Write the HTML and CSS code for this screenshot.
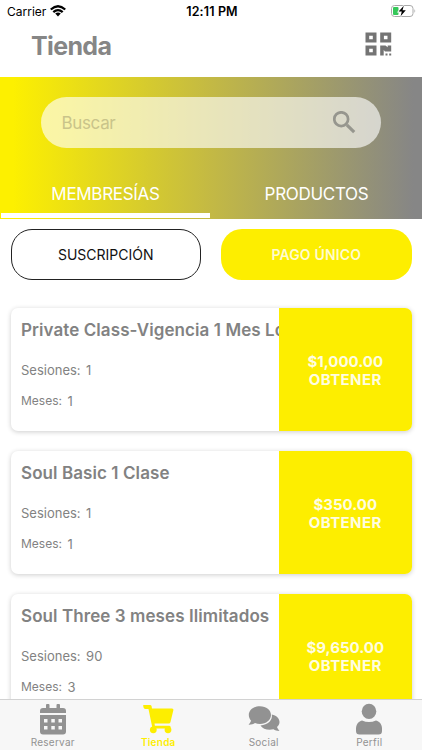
FILE: index.html
```html
<!DOCTYPE html>
<html lang="es">
<head>
<meta charset="utf-8">
<title>Tienda</title>
<link rel="stylesheet" href="styles.css">
</head>
<body>
<div class="app">
  <div class="status">
    <div class="carrier"><span>Carrier</span>
      <svg width="16" height="12" viewBox="0 0 16 12" fill="none" stroke="#000" stroke-width="2.300"><path d="M.8 4.500Q8-2 15.200 4.500M3.300 7.200Q8 3 12.700 7.200"/><path d="M5.200 8.600Q8 6.600 10.800 8.600L8 11.500Z" fill="#000" stroke="none"/></svg>
    </div>
    <span class="time">12:11 PM</span>
    <svg class="battery" width="26" height="12" viewBox="0 0 26 12"><rect x=".5" y=".5" width="21.5" height="11" rx="3" fill="#fff" stroke="#aaa"/><path d="M23.500 4q1.500 2 0 4z" fill="#999"/><rect x="2" y="2" width="5.500" height="8" rx="1" fill="#35c759"/><path d="M12.800.8L7.600 6.600h3.200L9.600 11.200l5.200-6h-3.300z" fill="#000" stroke="#fff" stroke-width="1.600" paint-order="stroke"/></svg>
  </div>
  <header class="header">
    <h1>Tienda</h1>
    <svg width="27" height="24" viewBox="0 0 27 24" fill="#747474"><path fill-rule="evenodd" d="M.5.500h11v10H.5zM4.200 3.700v3.600h3.600V3.700zM15.200.500h11v10h-11zM18.900 3.700v3.600h3.600V3.700zM.5 13.500h11v10H.5zM4.200 16.700v3.600h3.600v-3.600z"/><path d="M15.200 13.500h5.300l2.200 1.700v-1.700h3.500v6H20l-1.300-1.500v5.500h-3.500zM20.500 21.500h2v2h-2zM24.200 21.500h2v2h-2z"/></svg>
  </header>
  <section class="hero">
    <div class="search"><span>Buscar</span>
      <svg width="23" height="23" viewBox="0 0 23 23" fill="none" stroke="#96968e"><circle cx="8.200" cy="8.200" r="6.900" stroke-width="2.700"/><path d="M13.800 13.800l7.400 7.400" stroke-width="3.200"/></svg>
    </div>
    <div class="tabs"><div class="tab active"><span>MEMBRESÍAS</span></div><div class="tab"><span>PRODUCTOS</span></div></div>
  </section>
  <div class="pills"><div class="pill outline">SUSCRIPCIÓN</div><div class="pill solid">PAGO ÚNICO</div></div>
  <main class="list">
    <article class="card"><div class="info"><h2>Private Class-Vigencia 1 Mes Locker</h2><p class="sessions"><span>Sesiones:</span><span>1</span></p><p class="months"><span>Meses:</span><span>1</span></p></div><div class="buy"><span>$1,000.00</span><span class="get">OBTENER</span></div></article>
    <article class="card"><div class="info"><h2>Soul Basic 1 Clase</h2><p class="sessions"><span>Sesiones:</span><span>1</span></p><p class="months"><span>Meses:</span><span>1</span></p></div><div class="buy"><span>$350.00</span><span class="get">OBTENER</span></div></article>
    <article class="card"><div class="info"><h2>Soul Three 3 meses Ilimitados</h2><p class="sessions"><span>Sesiones:</span><span>90</span></p><p class="months"><span>Meses:</span><span>3</span></p></div><div class="buy"><span>$9,650.00</span><span class="get">OBTENER</span></div></article>
  </main>
  <nav class="nav">
    <div class="item"><svg width="32" height="32" viewBox="0 0 32 32"><path fill-rule="evenodd" d="M3 12h26v16.500q0 3-3 3H6q-3 0-3-3zM7 16v3.500h3.500V16zM14.300 16v3.500h3.500V16zM21.500 16v3.500H25V16zM7 23v3.500h3.500V23zM14.300 23v3.500h3.500V23zM21.500 23v3.500H25V23z"/><path d="M3 10V8q0-3 3-3h3V2q0-1 1-1h1.500q1 0 1 1v3h7V2q0-1 1-1H22q1 0 1 1v3h3q3 0 3 3v2z"/></svg><span>Reservar</span></div>
    <div class="item on"><svg width="32" height="32" viewBox="0 0 32 32"><path d="M1.500 2H8q1.300 0 1.600 1.300L10 5.500h20q1.700 0 1.400 1.600L28.500 19q-.3 1.500-1.800 1.500H12.500l.4 2.200H27q1.600 0 1.600 1.300T27 25.500H10.500L6.500 6H3.500Q1.200 6 1.200 2z"/><circle cx="11.300" cy="26.800" r="3.400"/><circle cx="26" cy="26.800" r="3.400"/></svg><span>Tienda</span></div>
    <div class="item"><svg width="32" height="32" viewBox="0 0 32 32"><path d="M23.800 11.500c4.600 1 7.700 3.900 7.700 7.500 0 2-1 3.800-2.500 5.100.5 1.500 1.500 2.700 2.500 3.900-2.600 0-4.500-.8-6-1.700-5.200 1.300-11-.2-13-3.800 7.300-.5 12.400-5.500 11.300-11z"/><path d="M12 3.200c6.200 0 11 3.700 11 8.800s-4.800 8.900-11 8.900c-1.800 0-3.500-.3-5-.9-1.600 1-3.800 1.800-6.400 1.700 1.100-1.200 2-2.500 2.500-4C1.700 16.200.8 14.200.8 12c0-5.100 5-8.800 11.200-8.800z"/></svg><span>Social</span></div>
    <div class="item"><svg width="32" height="32" viewBox="0 0 32 32"><ellipse cx="16" cy="8.400" rx="7.300" ry="7.600"/><path d="M9 17.500q7 3 14 0c4 1 6 4.500 6 8V28q0 3.500-3.500 3.500h-19Q3 31.500 3 28v-2.500c0-3.500 2-7 6-8z"/></svg><span>Perfil</span></div>
  </nav>
</div>
</body>
</html>
```
FILE: styles.css
```css
* { box-sizing: border-box; }
body { margin: 0; font-family: Inter, "Liberation Sans", sans-serif; background: #fff; }
svg { display: block; flex: none; }
h1, h2, p { margin: 0; }
.app { height: 750px; width: 422px; overflow: hidden; display: flex; flex-direction: column; }
.status { height: 22px; flex: none; display: grid; grid-template-columns: 1fr auto 1fr; align-items: center; padding: 0 5px 0 7px; }
.carrier { display: flex; align-items: center; gap: 4px; font-size: 12px; }
.time { font-size: 12.5px; font-weight: 600; letter-spacing: .15px; }
.battery { justify-self: end; }
.header { height: 55px; flex: none; display: flex; justify-content: space-between; padding: 10px 30px 0 31px; }
.header h1 { font-size: 25px; line-height: 29px; font-weight: 700; letter-spacing: -.65px; color: #868686; }
.hero { height: 142px; flex: none; padding-top: 20px; background: linear-gradient(90deg, #fdf000 3%, #c3b944 50%, #868686 98%); display: flex; flex-direction: column; justify-content: space-between; }
.search { width: 340px; height: 51px; margin-left: 41px; border-radius: 26px; background: rgba(255, 255, 255, .63); display: flex; align-items: center; justify-content: space-between; padding: 0 25px 0 20.5px; font-size: 17px; letter-spacing: -.35px; color: #c9c48a; }
.tabs { display: flex; height: 49px; }
.tab { width: 211px; color: #fff; font-size: 17px; letter-spacing: -.3px; text-align: center; line-height: 49px; height: 48px; }
.active { border-bottom: 5px solid #fff; width: 209px; margin: 0 1px; }
.pills { display: flex; gap: 20px; padding: 10px 10.5px 0; flex: none; }
.pill { height: 51px; width: 190.5px; border-radius: 21px; text-align: center; line-height: 52px; font-size: 14px; }
.outline { border: 1px solid #222; line-height: 49px; color: #111; }
.solid { background: #fdee00; color: #fffbd0; font-weight: 600; letter-spacing: .15px; }
.list { flex: 1; min-height: 0; padding: 28px 10.5px 0; display: flex; flex-direction: column; gap: 20px; overflow: hidden; }
.card { height: 123px; width: 401px; flex: none; display: flex; border-radius: 7px; box-shadow: 0 1px 5px rgba(0, 0, 0, .2); }
.info { width: 268.5px; padding: 11px 0 0 10.5px; overflow: hidden; white-space: nowrap; color: #828282; }
.info h2 { font-size: 17px; line-height: 22px; font-weight: 600; letter-spacing: .08px; }
.info p { line-height: 18px; display: flex; gap: 5.5px; }
.sessions { font-size: 13px; margin-top: 20px; }
.months { font-size: 12px; margin-top: 13px; }
.months span + span { font-size: 13px; }
.buy { flex: 1; background: #fdee00; border-radius: 0 7px 7px 0; color: #fffde1; display: flex; flex-direction: column; align-items: center; justify-content: center; padding-top: 2px; font-size: 15px; line-height: 18px; font-weight: 700; }
.get { letter-spacing: .4px; }
.nav { height: 51px; flex: none; border-top: 1px solid #d2d2d2; background: #f7f7f7; display: flex; }
.item { flex: 1; display: flex; flex-direction: column; align-items: center; padding-top: 3px; color: #929292; font-size: 10px; line-height: 14px; letter-spacing: .25px; }
.item svg { fill: currentColor; }
.on { color: #fdee00; font-weight: 600; }
```
